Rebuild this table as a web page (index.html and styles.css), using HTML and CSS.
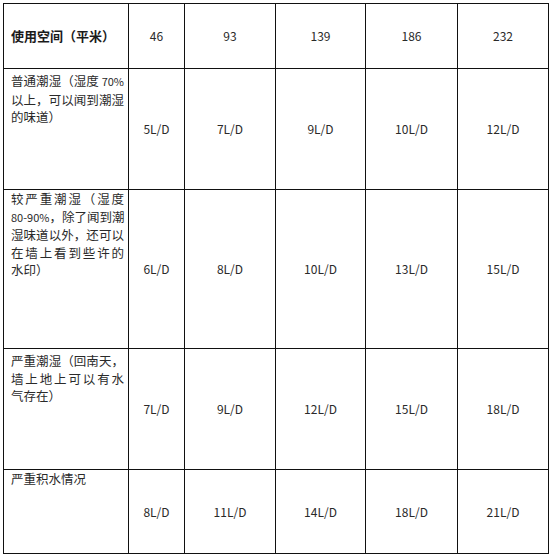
FILE: index.html
```html
<!DOCTYPE html>
<html lang="zh-CN">
<head>
<meta charset="utf-8">
<title>除湿机选择表</title>
<link rel="stylesheet" href="styles.css">
</head>
<body>
<table class="grid">
  <colgroup>
    <col class="c-label">
    <col class="c-46">
    <col class="c-93">
    <col class="c-139">
    <col class="c-186">
    <col class="c-232">
  </colgroup>
  <tr class="r-head">
    <th class="label head-label">使用空间（平米）</th>
    <td class="val">46</td>
    <td class="val">93</td>
    <td class="val">139</td>
    <td class="val">186</td>
    <td class="val">232</td>
  </tr>
  <tr class="r-1">
    <td class="label pad-a">
      <span class="ln full">普通潮湿（湿度 <span class="lat">70%</span></span>
      <span class="ln full">以上，可以闻到潮湿</span>
      <span class="ln">的味道）</span>
    </td>
    <td class="val">5L/D</td>
    <td class="val">7L/D</td>
    <td class="val">9L/D</td>
    <td class="val">10L/D</td>
    <td class="val">12L/D</td>
  </tr>
  <tr class="r-2">
    <td class="label pad-b">
      <span class="ln full">较严重潮湿（湿度</span>
      <span class="ln full"><span class="lat">80-90%</span>，除了闻到潮</span>
      <span class="ln full">湿味道以外，还可以</span>
      <span class="ln full">在墙上看到些许的</span>
      <span class="ln">水印）</span>
    </td>
    <td class="val">6L/D</td>
    <td class="val">8L/D</td>
    <td class="val">10L/D</td>
    <td class="val">13L/D</td>
    <td class="val">15L/D</td>
  </tr>
  <tr class="r-3">
    <td class="label pad-a">
      <span class="ln full">严重潮湿（回南天，</span>
      <span class="ln full">墙上地上可以有水</span>
      <span class="ln">气存在）</span>
    </td>
    <td class="val">7L/D</td>
    <td class="val">9L/D</td>
    <td class="val">12L/D</td>
    <td class="val">15L/D</td>
    <td class="val">18L/D</td>
  </tr>
  <tr class="r-4">
    <td class="label pad-b">
      <span class="ln">严重积水情况</span>
    </td>
    <td class="val">8L/D</td>
    <td class="val">11L/D</td>
    <td class="val">14L/D</td>
    <td class="val">18L/D</td>
    <td class="val">21L/D</td>
  </tr>
</table>
</body>
</html>
```
FILE: styles.css
```css
html, body {
  margin: 0;
  padding: 0;
  background: #ffffff;
}

body {
  padding: 3px 0 0 3px;
  font-family: "Noto Sans CJK SC", "Noto Sans", sans-serif;
  font-size: 12px;
  color: #2a2a2a;
}

.grid {
  border-collapse: collapse;
  table-layout: fixed;
  width: 545px;
}

.grid th,
.grid td {
  border: 1px solid #111111;
  padding: 0;
  line-height: 17.5px;
}

.c-label { width: 125px; }
.c-46 { width: 56px; }
.c-93 { width: 91px; }
.c-139 { width: 90px; }
.c-186 { width: 92px; }
.c-232 { width: 91px; }

.r-head { height: 65px; }
.r-1 { height: 121px; }
.r-2 { height: 159px; }
.r-3 { height: 121px; }
.r-4 { height: 84px; }

.grid .label {
  text-align: left;
  vertical-align: top;
  padding: 0 4px 0 7px;
  font-size: 12.5px;
}

.grid .head-label {
  vertical-align: middle;
  font-weight: bold;
  font-size: 13px;
  color: #1a1a1a;
}

.grid .pad-a { padding-top: 3px; }
.grid .pad-b { padding-top: 0; }

.ln {
  display: block;
  white-space: nowrap;
}

.ln.full {
  text-align: justify;
  text-align-last: justify;
}

.lat {
  font-size: 11px;
}

.val {
  text-align: center;
  vertical-align: middle;
}
```
